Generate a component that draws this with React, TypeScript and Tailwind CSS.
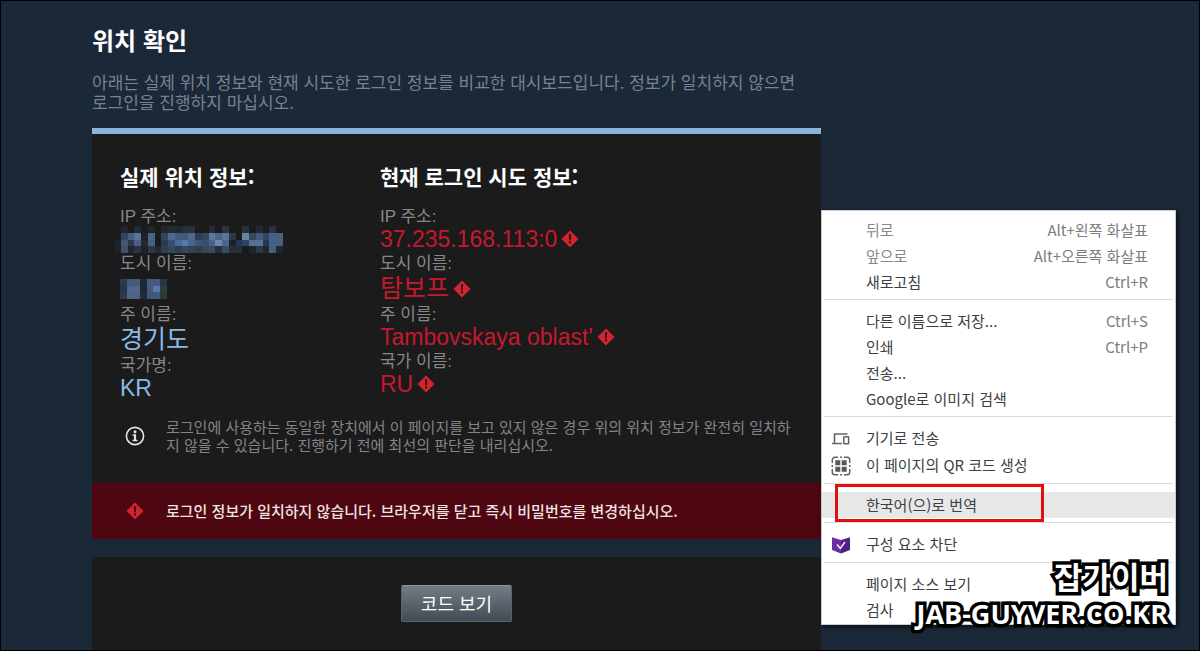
import type { ReactNode } from "react";
import clsx from "clsx";

interface LocationField {
  label: string;
  value?: string;
  /** Hangul values are set a little larger than latin ones */
  hangul?: boolean;
  mosaic?: string[][];
}

interface MenuEntry {
  label: string;
  shortcut?: string;
  disabled?: boolean;
  active?: boolean;
  icon?: ReactNode;
}

// Mosaic cells, row by row. An empty string leaves the panel visible.
const IP_MOSAIC = [
  ["", "#1f262f", "", "#222a34", "", "#1f252e", "", "#20272f", "#222a34", "#20272f", "#27303b", "#27303b", "", "", "#252c35", "", "#2a333e", "", "", "#27303b", "", "#222a34", "", "#28313c", ""],
  ["", "#33465e", "#475f7e", "#587395", "#1d222a", "#4a6486", "", "#34465e", "#4c688f", "#455c78", "#425a7a", "#4d6a8c", "#2c3b4f", "#34465e", "#5c7799", "#4c668b", "#5a7494", "#2d3947", "", "#6a84a5", "#37485c", "#3f5a80", "#34465e", "#43608a", "#46607e"],
  ["#1e2329", "#43586f", "#2c3847", "#46608a", "#222a35", "#4a6080", "", "#2c3b4f", "#38506f", "#4a6a99", "#5778a5", "#47648a", "#3f5572", "#38506f", "#4a628a", "#6a86ab", "#4c668b", "#1d222a", "#26374f", "#2f4360", "#55708f", "#52709a", "#26374f", "#43608a", "#46607e"],
  ["#1e2329", "#3f5266", "#20262e", "#2b333e", "#1f242c", "#2d3947", "#232a33", "#303f50", "#37485c", "#2f3d4e", "#37485c", "#334357", "#2f3d4e", "#37485c", "#3a4c60", "#26303c", "#3a4c60", "#26303c", "#26303c", "", "#20262e", "#2d3947", "#20262e", "#46607e", "#20262e"],
];

const CITY_MOSAIC = [
  ["#2b3a4e", "#46597a", "#475c78", "#1f2732", "#455d80", "#44597c", "#2a3540"],
  ["#263446", "#50678a", "#50678a", "#1f2732", "#415a80", "#5a78a6", "#2c3d45"],
  ["#2b3a4e", "#4c6385", "#4c6385", "#202a38", "#405577", "#3d5780", "#2c3a38"],
];

const ACTUAL: LocationField[] = [
  { label: "IP 주소:", mosaic: IP_MOSAIC },
  { label: "도시 이름:", mosaic: CITY_MOSAIC, hangul: true },
  { label: "주 이름:", value: "경기도", hangul: true },
  { label: "국가명:", value: "KR" },
];

const ATTEMPT: LocationField[] = [
  { label: "IP 주소:", value: "37.235.168.113:0" },
  { label: "도시 이름:", value: "탐보프", hangul: true },
  { label: "주 이름:", value: "Tambovskaya oblast'" },
  { label: "국가 이름:", value: "RU" },
];

const MENU: MenuEntry[][] = [
  [
    { label: "뒤로", shortcut: "Alt+왼쪽 화살표", disabled: true },
    { label: "앞으로", shortcut: "Alt+오른쪽 화살표", disabled: true },
    { label: "새로고침", shortcut: "Ctrl+R" },
  ],
  [
    { label: "다른 이름으로 저장...", shortcut: "Ctrl+S" },
    { label: "인쇄", shortcut: "Ctrl+P" },
    { label: "전송..." },
    { label: "Google로 이미지 검색" },
  ],
  [
    { label: "기기로 전송", icon: <DevicesIcon /> },
    { label: "이 페이지의 QR 코드 생성", icon: <QrIcon /> },
  ],
  [{ label: "한국어(으)로 번역", active: true }],
  [{ label: "구성 요소 차단", icon: <BlockerIcon /> }],
  [{ label: "페이지 소스 보기", shortcut: "Ctrl+U" }, { label: "검사" }],
];

function AlertIcon() {
  return (
    <svg width="18" height="18" viewBox="0 0 18 18" className="shrink-0" aria-hidden="true">
      <path d="M9 .5 17.500 9 9 17.500 .5 9Z" fill="#d3232f" />
      <path d="M7.800 4.300h2.400l-.4 6H8.200Z" fill="#2a1013" />
      <rect x="8" y="11.300" width="2" height="2" fill="#2a1013" />
    </svg>
  );
}

function InfoIcon() {
  return (
    <svg width="20" height="20" viewBox="0 0 20 20" className="shrink-0" aria-hidden="true">
      <circle cx="10" cy="10" r="8.600" fill="none" stroke="#e6e6e6" strokeWidth="1.600" />
      <circle cx="10" cy="5.800" r="1.500" fill="#e6e6e6" />
      <path d="M7.600 8.300h3.500v5.400h1.300v1.500H7.600v-1.500h1.300V9.800H7.600Z" fill="#e6e6e6" />
    </svg>
  );
}

function DevicesIcon() {
  return (
    <svg width="20" height="20" viewBox="0 0 20 20" fill="none" stroke="#5f6368" aria-hidden="true">
      <path d="M3.500 14V5h13M1 14.500h10" strokeWidth="1.600" />
      <rect x="12.800" y="7.800" width="4.800" height="7" rx=".5" strokeWidth="1.500" />
    </svg>
  );
}

function QrIcon() {
  return (
    <svg width="20" height="20" viewBox="0 0 20 20" aria-hidden="true">
      <path
        d="M1.300 7V3.800a2.500 2.500 0 0 1 2.500-2.500H7M13 1.300h3.200a2.500 2.500 0 0 1 2.500 2.500V7M18.700 13v3.200a2.500 2.500 0 0 1-2.500 2.500H13M7 18.700H3.800a2.500 2.500 0 0 1-2.500-2.500V13M9 1.300h2M9 18.700h2M1.300 9v2M18.700 9v2"
        fill="none"
        stroke="#5f6368"
        strokeWidth="1.500"
      />
      <path d="M4.300 4.300h5v5h-5zM10.700 4.300h5v5h-5zM4.300 10.700h5v5h-5zM10.700 10.700h5v5h-5z" fill="#55595e" />
    </svg>
  );
}

function BlockerIcon() {
  return (
    <svg width="20" height="20" viewBox="0 0 20 20" aria-hidden="true">
      <path d="M1 2.200 10 5v13.500L1 15Z" fill="#6b2fa3" />
      <path d="M19 2.200 10 5v13.500l9-3.500Z" fill="#512083" />
      <path d="m6 9.500 3.300 4L14 7" fill="none" stroke="#fff" strokeWidth="1.300" />
    </svg>
  );
}

function Mosaic({ cells }: { cells: string[][] }) {
  const size = 7;
  const cols = cells[0].length;
  return (
    <svg
      viewBox={`0 0 ${cols * size} ${cells.length * size}`}
      className={cols > 10 ? "-ml-1.5 h-[27px]" : "h-5"}
      shapeRendering="crispEdges"
      aria-hidden="true"
    >
      {cells.map((row, y) =>
        row.map(
          (fill, x) =>
            fill && (
              <rect key={`${x}-${y}`} x={x * size} y={y * size} width={size} height={size} fill={fill} />
            ),
        ),
      )}
    </svg>
  );
}

function LocationColumn({
  title,
  fields,
  mismatch = false,
}: {
  title: string;
  fields: LocationField[];
  mismatch?: boolean;
}) {
  return (
    <section>
      <h2 className="mb-4 text-[21px] leading-7 font-bold text-white">{title}</h2>
      <dl>
        {fields.map((field) => (
          <div key={field.label}>
            <dt className="h-5 font-['Liberation_Sans','Noto_Sans_CJK_KR',sans-serif] text-[17px] leading-[22px] text-[#84888d]">
              {field.label}
            </dt>
            <dd
              className={clsx(
                "flex items-center gap-1 font-['Liberation_Sans','Noto_Sans_CJK_KR',sans-serif]",
                field.hangul ? "h-[31px] text-[25px]" : "h-[27px] pb-px text-[23px]",
                mismatch ? "text-[#c5192d]" : "text-[#8ab9e6]",
              )}
            >
              {field.mosaic ? <Mosaic cells={field.mosaic} /> : field.value}
              {mismatch && <AlertIcon />}
            </dd>
          </div>
        ))}
      </dl>
    </section>
  );
}

function MenuItem({ item }: { item: MenuEntry }) {
  return (
    <li className="relative">
      <button
        type="button"
        role="menuitem"
        disabled={item.disabled}
        className={clsx(
          "flex w-full items-center pr-[27px] pl-[9px] text-left text-[15px]",
          item.icon ? "h-[27px]" : "h-[26px]",
          item.active && "bg-[#e7e7e7]",
          item.disabled ? "text-[#85888c]" : "text-[#3c3f43]",
        )}
      >
        <span className="w-[35px] shrink-0">{item.icon}</span>
        <span className="flex-1">{item.label}</span>
        {item.shortcut && <span className="text-[#7a7d81]">{item.shortcut}</span>}
      </button>
      {item.active && (
        <span className="pointer-events-none absolute -top-2 left-[13px] h-[38px] w-[209px] border-3 border-[#e01010]" />
      )}
    </li>
  );
}

function ContextMenu() {
  return (
    <div
      role="menu"
      className="absolute top-[209px] left-[820px] w-[355px] border border-[#c9cbcd] bg-white pt-1.5 pb-px shadow-[2px_2px_4px_rgba(0,0,0,0.6)]"
    >
      {MENU.map((group, i) => (
        <ul
          key={group[0].label}
          className={clsx(i > 0 && "mt-1 before:mx-0.5 before:mb-2 before:block before:h-px before:bg-[#dcdcdc]")}
        >
          {group.map((item) => (
            <MenuItem key={item.label} item={item} />
          ))}
        </ul>
      ))}
    </div>
  );
}

function Watermark() {
  return (
    <div className="pointer-events-none absolute right-[31px] bottom-[17px] text-right font-bold text-white [-webkit-text-stroke:7px_#000] [paint-order:stroke_fill] [stroke-linejoin:round]">
      <p className="text-[31px] leading-[38px]">잡가이버</p>
      <p className="font-['Open_Sans',sans-serif] text-[27px] leading-[38px]">JAB-GUYVER.CO.KR</p>
    </div>
  );
}

export default function App() {
  return (
    <div
      lang="ko"
      className="relative flex min-h-screen flex-col overflow-hidden border border-black bg-[#1b2838] font-['Noto_Sans_CJK_KR',sans-serif]"
    >
      <main className="ml-[91px] flex w-full max-w-[729px] flex-1 flex-col pt-[25px]">
        <h1 className="mb-[18px] text-2xl leading-7 font-bold text-white">위치 확인</h1>
        <p className="mb-4 text-[17px] leading-5 break-keep text-[#768290]">
          아래는 실제 위치 정보와 현재 시도한 로그인 정보를 비교한 대시보드입니다. 정보가 일치하지 않으면
          로그인을 진행하지 마십시오.
        </p>

        <div className="border-t-6 border-[#8ab4dc] bg-[#1b1b1b]">
          <div className="grid grid-cols-[260px_1fr] px-7 pt-7">
            <LocationColumn title="실제 위치 정보:" fields={ACTUAL} />
            <LocationColumn title="현재 로그인 시도 정보:" fields={ATTEMPT} mismatch />
          </div>
          <div className="flex items-center gap-[21px] pt-4 pr-7 pb-[29px] pl-[33px]">
            <InfoIcon />
            <p className="text-[15px] leading-[18px] text-[#81858a]">
              로그인에 사용하는 동일한 장치에서 이 페이지를 보고 있지 않은 경우 위의 위치 정보가 완전히 일치하지
              않을 수 있습니다. 진행하기 전에 최선의 판단을 내리십시오.
            </p>
          </div>
          <div className="flex h-14 items-center gap-[22px] bg-[#4e0711] pl-[34px]">
            <AlertIcon />
            <p className="text-[15px] font-medium text-[#eee3e4]">
              로그인 정보가 일치하지 않습니다. 브라우저를 닫고 즉시 비밀번호를 변경하십시오.
            </p>
          </div>
        </div>

        <div className="mt-[18px] flex-1 bg-[#1b1b1b] py-7 text-center">
          <button
            type="button"
            className="h-[37px] rounded-xs border border-[#59626a] border-t-[#8b939b] bg-linear-to-b from-[#747c86] to-[#434c55] px-[19px] pb-0.5 text-lg leading-8 text-white"
          >
            코드 보기
          </button>
        </div>
      </main>

      <ContextMenu />
      <Watermark />
    </div>
  );
}
